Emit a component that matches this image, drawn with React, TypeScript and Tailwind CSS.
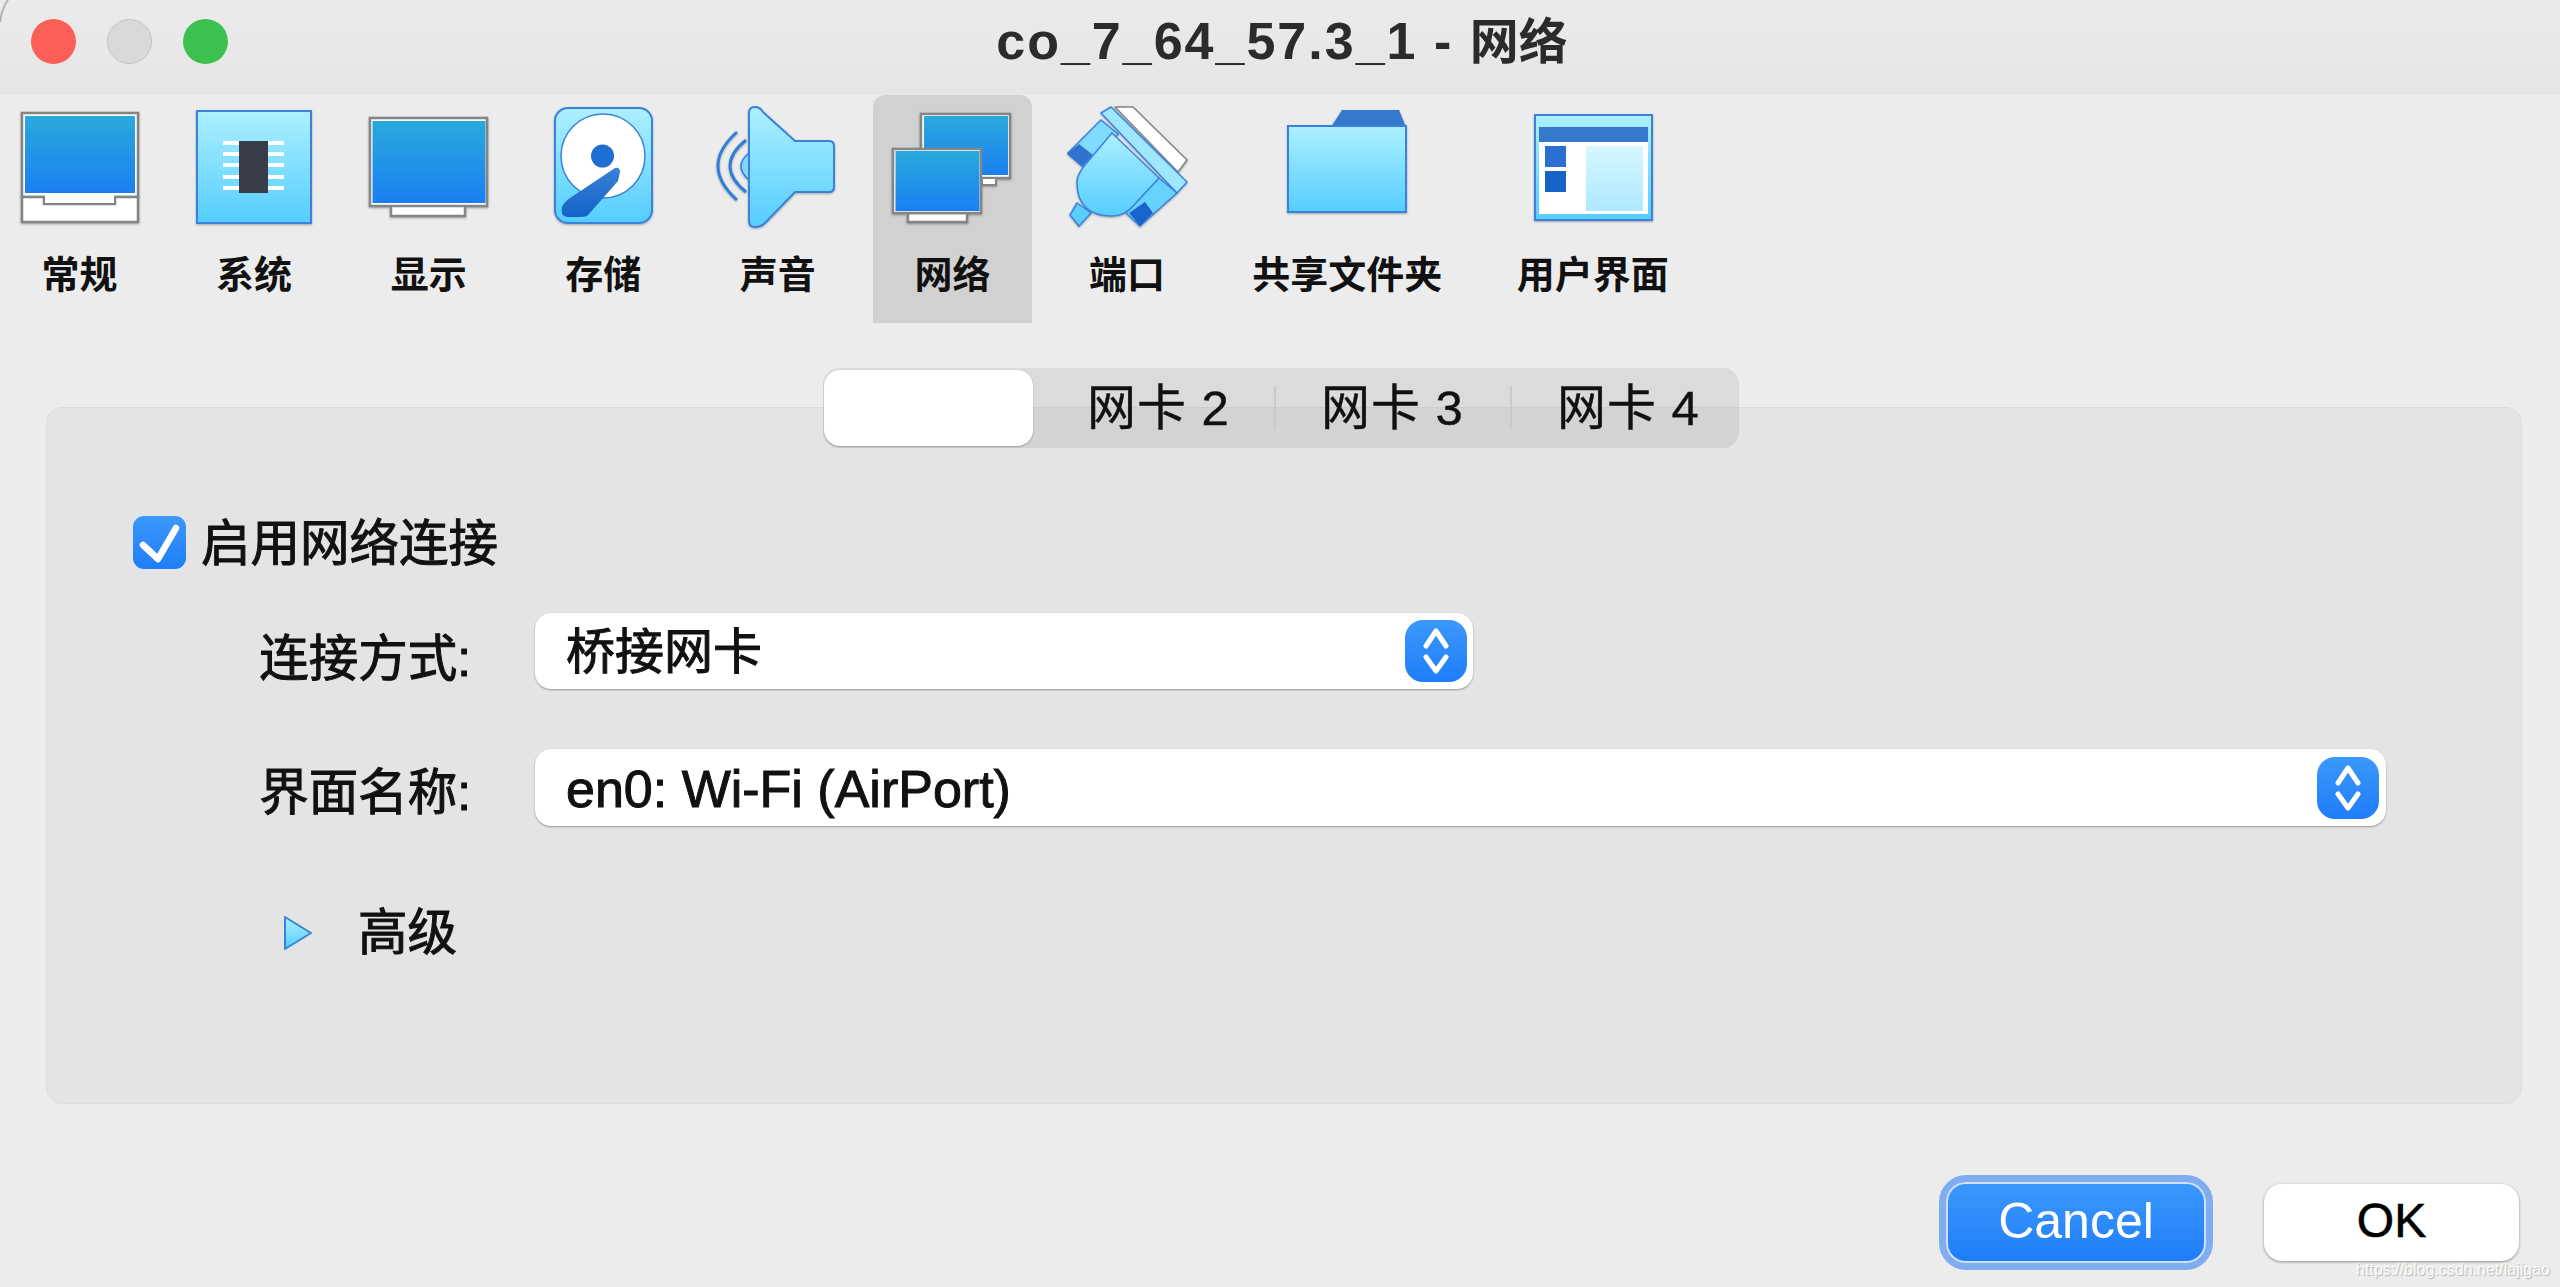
const cjk = "font-['Liberation_Sans','Noto_Sans_CJK_SC',sans-serif]";

function Grads() {
  return (
    <defs>
      <linearGradient id="screen" x1="0" y1="0" x2="0" y2="1">
        <stop offset="0" stopColor="#2aa9dc" />
        <stop offset="1" stopColor="#1a7ff2" />
      </linearGradient>
      <linearGradient id="light" x1="0" y1="0" x2="0" y2="1">
        <stop offset="0" stopColor="#adf0ff" />
        <stop offset="1" stopColor="#55cdff" />
      </linearGradient>
      <linearGradient id="pane" x1="0" y1="0" x2="0" y2="1">
        <stop offset="0" stopColor="#d6f7ff" />
        <stop offset="1" stopColor="#aee9ff" />
      </linearGradient>
      <linearGradient id="arm" x1="0" y1="0" x2="0" y2="1">
        <stop offset="0" stopColor="#3a80d6" />
        <stop offset="1" stopColor="#1463c8" />
      </linearGradient>
    </defs>
  );
}

const Edge = "#3a82dc";
const Frame = "#858585";

function IconBox({ view, children }: { view: string; children: React.ReactNode }) {
  return (
    <svg width="130" height="125" viewBox={view} className="shrink-0 drop-shadow-[0_1px_1px_rgba(0,0,0,0.3)]">
      <Grads />
      {children}
    </svg>
  );
}

function GeneralIcon() {
  return (
    <IconBox view="15 105 130 125">
      <rect x="22" y="113" width="116" height="84" fill="#fff" stroke={Frame} strokeWidth="2.500" />
      <path d="M22 197H44V204H115V197H138V222H22Z" fill="#fff" stroke={Frame} strokeWidth="2.500" />
      <rect x="25" y="116" width="110" height="77" fill="url(#screen)" />
      <rect x="45" y="194" width="69" height="9" fill="#fff" />
    </IconBox>
  );
}

function SystemIcon() {
  return (
    <IconBox view="190 105 130 125">
      <rect x="198" y="111" width="114" height="112" fill="url(#light)" stroke={Edge} strokeWidth="2" />
      {[143, 154, 165, 177, 188].map((y) => (
        <rect key={y} x="224" y={y - 2} width="61" height="4" fill="#fff" />
      ))}
      <rect x="240" y="141" width="29" height="52" fill="#383c48" />
    </IconBox>
  );
}

function DisplayIcon() {
  return (
    <IconBox view="364 105 130 125">
      <path d="M391 205H465V216H391Z" fill="#fff" stroke={Frame} strokeWidth="2.500" />
      <rect x="370" y="118" width="117" height="88" fill="#fff" stroke={Frame} strokeWidth="2.500" />
      <rect x="372.500" y="121" width="113" height="82" fill="url(#screen)" />
    </IconBox>
  );
}

function StorageIcon() {
  return (
    <IconBox view="539 105 130 125">
      <rect x="556" y="108" width="97" height="115" rx="13" fill="url(#light)" stroke={Edge} strokeWidth="2" />
      <circle cx="604" cy="156" r="42" fill="#fff" stroke={Edge} strokeWidth="1.500" />
      <circle cx="603.500" cy="156" r="11.500" fill="#1f6fd2" />
      <path d="M616 168Q621 167 621 172L619 181L590 214Q588 217 582 217H568Q561 216 563 207Q565 202 571 198Z" fill="url(#arm)" />
    </IconBox>
  );
}

function SoundIcon() {
  return (
    <IconBox view="713 105 130 125">
      <path d="M737 132Q699 166 737 200" fill="none" stroke="#2f7ed8" strokeWidth="3" />
      <path d="M746 140Q714 166 746 192" fill="none" stroke="#2f7ed8" strokeWidth="3" />
      <path d="M749 153Q733 166 749 180Z" fill="#7fd6ff" stroke="#2f7ed8" strokeWidth="1.500" />
      <path d="M749 113Q749 107 755 107Q760 107 763 112L795 141H829Q834 141 834 146V187Q834 192 829 192H795L765 223Q761 227 755 227Q749 227 749 221Z" fill="url(#light)" stroke={Edge} strokeWidth="2" />
    </IconBox>
  );
}

function NetworkIcon() {
  return (
    <IconBox view="888 105 130 125">
      <rect x="922" y="114" width="89" height="64" fill="#fff" stroke={Frame} strokeWidth="2.500" />
      <rect x="925" y="116" width="84" height="59" fill="url(#screen)" />
      <path d="M983 178H997V185H983Z" fill="#fff" stroke={Frame} strokeWidth="2" />
      <path d="M909 213H968V222H909Z" fill="#fff" stroke={Frame} strokeWidth="2.500" />
      <rect x="894" y="149" width="88" height="64" fill="#fff" stroke={Frame} strokeWidth="2.500" />
      <rect x="896.500" y="151" width="84" height="60" fill="url(#screen)" />
    </IconBox>
  );
}

function PortIcon() {
  return (
    <IconBox view="1062 105 130 125">
      <path d="M1133 107L1187 160L1178 172L1115 107Z" fill="#fff" stroke={Frame} strokeWidth="1.500" strokeLinejoin="round" />
      <path d="M1101 120L1068 153L1088 170L1118 134Z" fill="#7fdcff" stroke={Edge} strokeWidth="1.500" />
      <path d="M1079 144L1067 154L1082 167L1093 155Z" fill="#2f72cf" />
      <path d="M1159 178L1177 193L1140 226L1126 213Z" fill="#66d3ff" stroke={Edge} strokeWidth="1.500" />
      <path d="M1145 202L1129 213L1140 226L1153 213Z" fill="#1664cc" />
      <path d="M1077 203L1070 215L1079 226L1091 213Z" fill="#58cfff" stroke={Edge} strokeWidth="1.500" />
      <path d="M1112 133L1085 165Q1077 175 1077 182Q1077 216 1112 216Q1125 216 1134 205L1159 178Z" fill="url(#light)" stroke={Edge} strokeWidth="1.500" />
      <path d="M1101 113L1111 107L1187 182L1177 193Z" fill="#9fe7ff" stroke={Edge} strokeWidth="1.500" strokeLinejoin="round" />
    </IconBox>
  );
}

function FolderIcon() {
  return (
    <IconBox view="1283 105 130 125">
      <path d="M1332 127L1343 110H1400L1407 127Z" fill="#3678cc" />
      <rect x="1289" y="126" width="118" height="86" fill="url(#light)" stroke={Edge} strokeWidth="2" />
    </IconBox>
  );
}

function UiIcon() {
  return (
    <IconBox view="1529 105 130 125">
      <rect x="1536" y="115" width="117" height="105" fill="url(#light)" stroke={Edge} strokeWidth="2" />
      <rect x="1540" y="142" width="109" height="72" fill="#fff" />
      <rect x="1540" y="127" width="109" height="15" fill="#3678cc" />
      <rect x="1546" y="146" width="21" height="21" fill="#2a70d0" />
      <rect x="1546" y="171" width="21" height="21" fill="#1664c8" />
      <rect x="1587" y="146" width="57" height="65" fill="url(#pane)" />
    </IconBox>
  );
}

function ToolItem({ label, width, active, icon }: { label: string; width: string; active?: boolean; icon: React.ReactNode }) {
  return (
    <div className={`flex h-[228px] flex-col items-center pt-[10px] ${width} ${active ? "rounded-t-[12px] bg-[#d1d1d1]" : ""}`}>
      {icon}
      <div className="mt-[23px] text-[38px] leading-[38px] font-bold text-[#111] font-['Noto_Sans_CJK_SC',sans-serif]">{label}</div>
    </div>
  );
}

function Stepper() {
  return (
    <div className="h-[62px] w-[62px] rounded-[18px] bg-gradient-to-b from-[#3b98fb] to-[#1f7dfa]">
      <svg width="62" height="62" viewBox="0 0 62 62" fill="none" stroke="#fff" strokeWidth="5" strokeLinecap="round" strokeLinejoin="round">
        <path d="M21 26L31 11L41 26" />
        <path d="M21 37L31 51L41 37" />
      </svg>
    </div>
  );
}

function Select({ text, size }: { text: string; size: string }) {
  return (
    <div className={`flex items-center justify-between rounded-[16px] bg-white pl-[31px] shadow-[0_1px_2px_rgba(0,0,0,0.35)] ${size}`}>
      <span className="pt-[2px] leading-none text-[#111] [-webkit-text-stroke:1px_#111]">{text}</span>
      <Stepper />
    </div>
  );
}

const labelText = "text-[49.500px] leading-none text-[#111] [-webkit-text-stroke:1px_#111]";

export default function App() {
  return (
    <div className={`relative flex h-[1287px] w-[2560px] flex-col overflow-hidden bg-[#ececec] ${cjk}`}>
      <div className="grid h-[95px] shrink-0 grid-cols-[1fr_auto_1fr] items-center bg-gradient-to-b from-[#ebebeb] to-[#e5e5e5] pb-[13px]">
        <div className="flex gap-[31px] pl-[31px]">
          <div className="h-[45px] w-[45px] rounded-full bg-[#fc5f57]" />
          <div className="h-[45px] w-[45px] rounded-full border border-[#c4c4c4] bg-[#d9d9d9]" />
          <div className="h-[45px] w-[45px] rounded-full bg-[#3cc14e]" />
        </div>
        <div className="ml-[4px] text-[52px] leading-none font-bold tracking-[2px] whitespace-nowrap text-[#2b2b2b]">
          co_7_64_57.3_1 - <span className="text-[49px] tracking-normal">网络</span>
        </div>
        <div />
      </div>

      <div className="flex h-[228px] shrink-0 gap-[15.600px]">
        <ToolItem label="常规" width="w-[159px]" icon={<GeneralIcon />} />
        <ToolItem label="系统" width="w-[159px]" icon={<SystemIcon />} />
        <ToolItem label="显示" width="w-[159px]" icon={<DisplayIcon />} />
        <ToolItem label="存储" width="w-[159px]" icon={<StorageIcon />} />
        <ToolItem label="声音" width="w-[159px]" icon={<SoundIcon />} />
        <ToolItem label="网络" width="w-[159px]" active icon={<NetworkIcon />} />
        <ToolItem label="端口" width="w-[159px]" icon={<PortIcon />} />
        <ToolItem label="共享文件夹" width="w-[250px]" icon={<FolderIcon />} />
        <ToolItem label="用户界面" width="w-[210px]" icon={<UiIcon />} />
      </div>

      <div className="relative z-10 mt-[45px] -mb-[41px] ml-[46px] flex h-[80px] w-[2476px] shrink-0 justify-center pr-[6px]">
        <div className="flex h-[80px] w-[916px] items-center rounded-[16px] bg-black/[0.07] pl-[1px] text-[49px] leading-none text-[#111] [-webkit-text-stroke:0.4px_#111]">
          <div className="h-[76px] w-[209px] rounded-[16px] bg-white shadow-[0_1px_2px_rgba(0,0,0,0.25)]" />
          <div className="w-[241px] pl-[54px] tracking-[1px] whitespace-nowrap">网卡 2</div>
          <div className="h-[44px] w-[2px] bg-[#c9c9c9]" />
          <div className="w-[234px] pl-[45px] tracking-[1px] whitespace-nowrap">网卡 3</div>
          <div className="h-[44px] w-[2px] bg-[#c9c9c9]" />
          <div className="w-[227px] pl-[45px] tracking-[1px] whitespace-nowrap">网卡 4</div>
        </div>
      </div>

      <div className="ml-[46px] h-[697px] w-[2476px] shrink-0 rounded-[16px] border border-[#dcdcdc] bg-[#e4e4e4] pt-[108px]">
        <div className="flex items-center gap-[15px] pl-[86px]">
          <div className="h-[53px] w-[53px] rounded-[11px] bg-gradient-to-b from-[#3b98fb] to-[#1f7dfa]">
            <svg width="53" height="53" viewBox="0 0 53 53" fill="none" stroke="#fff" strokeWidth="6.500" strokeLinecap="round" strokeLinejoin="round">
              <path d="M10 29L25 43L43 12" />
            </svg>
          </div>
          <span className={`pt-[2px] ${labelText}`}>启用网络连接</span>
        </div>

        <div className="mt-[44px] flex items-center gap-[64px]">
          <div className={`mt-[16px] w-[424px] text-right ${labelText}`}>连接方式:</div>
          <Select text="桥接网卡" size="h-[76px] w-[938px] pr-[6px] text-[49px]" />
        </div>

        <div className="mt-[60px] flex items-center gap-[64px]">
          <div className={`mt-[10px] w-[424px] text-right ${labelText}`}>界面名称:</div>
          <Select text="en0: Wi-Fi (AirPort)" size="h-[77px] w-[1851px] pr-[7px] text-[52px]" />
        </div>

        <div className="mt-[82px] flex items-center gap-[45px] pl-[236px]">
          <svg width="30" height="38" viewBox="0 0 30 38">
            <Grads />
            <path d="M2 3L28 19L2 35Z" fill="url(#light)" stroke={Edge} strokeWidth="2" strokeLinejoin="round" />
          </svg>
          <span className={labelText}>高级</span>
        </div>
      </div>

      <div className="mt-[80px] flex justify-end gap-[60px] pr-[41px]">
        <div className="flex h-[77px] w-[256px] items-center justify-center rounded-[18px] bg-gradient-to-b from-[#3b98fb] to-[#1f7dfa] pb-[4px] text-[50px] leading-none text-white shadow-[0_0_0_2px_#cfe0fa,0_0_0_9px_#7fadf0]">
          Cancel
        </div>
        <div className="flex h-[77px] w-[255px] items-center justify-center rounded-[18px] bg-white pb-[4px] text-[48px] leading-none text-black shadow-[0_1px_3px_rgba(0,0,0,0.4)] [-webkit-text-stroke:0.6px_#000]">
          OK
        </div>
      </div>

      <svg width="10" height="24" viewBox="0 0 10 24" className="absolute top-0 left-0">
        <path d="M8 0Q2 8 0 22" fill="none" stroke="#b4b4b4" strokeWidth="2" />
      </svg>

      <div className="absolute right-[10px] bottom-[9px] text-[16px] leading-none text-white/90 [text-shadow:1px_1px_1px_rgba(0,0,0,0.25)]">
        https://blog.csdn.net/lajigao
      </div>
    </div>
  );
}
